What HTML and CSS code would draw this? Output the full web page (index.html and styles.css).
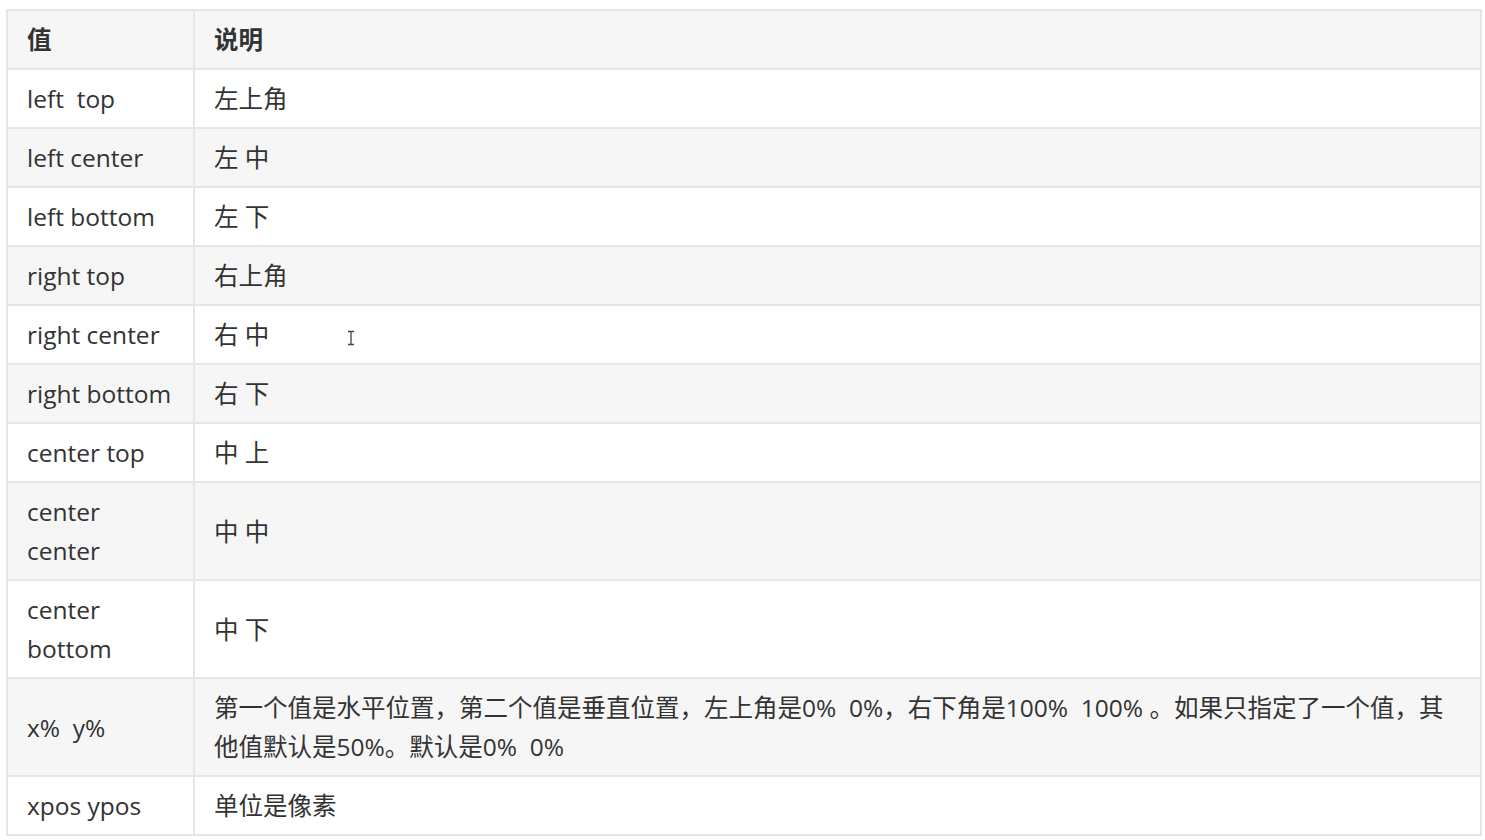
FILE: index.html
```html
<!DOCTYPE html>
<html lang="zh">
<head>
<meta charset="utf-8">
<link rel="stylesheet" href="styles.css">
</head>
<body>
<div class="page">
  <table class="values">
    <thead>
      <tr><th class="c1">值</th><th>说明</th></tr>
    </thead>
    <tbody>
      <tr><td>left&nbsp; top</td><td>左上角</td></tr>
      <tr><td>left center</td><td>左 中</td></tr>
      <tr><td>left bottom</td><td>左 下</td></tr>
      <tr><td>right top</td><td>右上角</td></tr>
      <tr><td>right center</td><td>右 中</td></tr>
      <tr><td>right bottom</td><td>右 下</td></tr>
      <tr><td>center top</td><td>中 上</td></tr>
      <tr><td>center center</td><td>中 中</td></tr>
      <tr><td>center bottom</td><td>中 下</td></tr>
      <tr><td>x%&nbsp; y%</td><td>第一个值是水平位置，第二个值是垂直位置，左上角是0%&nbsp; 0%，右下角是100%&nbsp; 100% 。如果只指定了一个值，其他值默认是50%。默认是0%&nbsp; 0%</td></tr>
      <tr><td>xpos ypos</td><td>单位是像素</td></tr>
    </tbody>
  </table>
  <svg class="cursor" width="8" height="16" viewBox="0 0 8 16"><path d="M1 1.5h2.2M4.8 1.5H7M4 2v12M1 14.5h2.2M4.8 14.5H7M3.2 1.5H4.8M3.2 14.5H4.8" stroke="#444" stroke-width="1.3" fill="none"/></svg>
</div>
</body>
</html>
```
FILE: styles.css
```css
html, body {
  margin: 0;
  padding: 0;
  background: #ffffff;
}
.page {
  position: relative;
  padding: 9px 4px 0 6px;
}
.values {
  width: 1476px;
  border-collapse: collapse;
  font-family: "Open Sans", "Noto Sans CJK SC", sans-serif;
  font-size: 24.5px;
  color: #333333;
}
.values th,
.values td {
  border: 2px solid #e6e6e6;
  padding: 9px 19px 9px 19px;
  line-height: 39px;
  text-align: left;
  vertical-align: middle;
}
.values th {
  font-weight: bold;
}
.values .c1 {
  width: 147px;
}
.values thead tr {
  background: #f6f6f6;
}
.values tbody tr:nth-child(odd) {
  background: #ffffff;
}
.values tbody tr:nth-child(even) {
  background: #f6f6f6;
}
.cursor {
  position: absolute;
  left: 347px;
  top: 330px;
}
```
